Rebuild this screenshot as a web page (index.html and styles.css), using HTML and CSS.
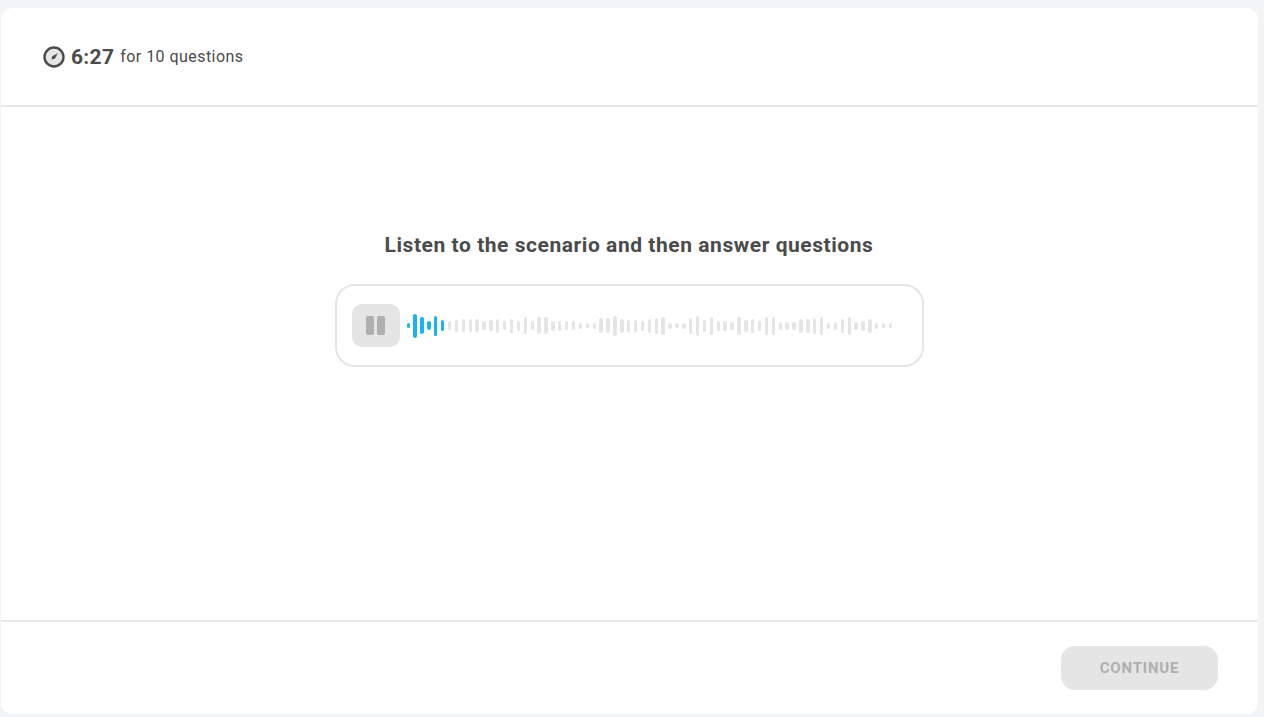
FILE: index.html
```html
<!DOCTYPE html>
<html lang="en">
<head>
    <meta charset="UTF-8">
    <title>Listening scenario</title>
    <link rel="stylesheet" href="styles.css">
</head>
<body>
    <div class="card">
        <!-- Timer -->
        <div class="top-bar">
            <svg class="timer-icon" width="22" height="22" viewBox="0 0 22 22">
                <circle cx="11" cy="11" r="9.5" fill="#e5e5e5" stroke="#4b4b4b" stroke-width="2.4"/>
                <path d="M8.6 13.4 L9.2 10.2 L14.8 7.2 L11.8 12.8 Z" fill="#4b4b4b"/>
            </svg>
            <span class="time">6:27</span>
            <span class="time-label">for 10 questions</span>
        </div>

        <!-- Challenge -->
        <div class="content">
            <h1 class="prompt">Listen to the scenario and then answer questions</h1>
            <div class="player">
                <div class="pause-btn">
                    <span class="pause-bar"></span>
                    <span class="pause-bar"></span>
                </div>
                <div class="wave" id="wave"></div>
            </div>
        </div>

        <!-- Footer -->
        <div class="bottom-bar">
            <button class="continue-btn">CONTINUE</button>
        </div>
    </div>
    <script src="wave.js"></script>
</body>
</html>
```

FILE: styles.css
```css
body {
    margin: 0;
    height: 717px;
    overflow: hidden;
    background-color: #f3f4f6;
    font-family: Roboto, "Liberation Sans", sans-serif;
    color: #4b4b4b;
}

.card {
    display: flex;
    flex-direction: column;
    box-sizing: border-box;
    height: 706px;
    width: 1257px;
    margin: 8px 0 0 1px;
    background-color: #fff;
    border-radius: 12px;
}

.top-bar {
    display: flex;
    align-items: center;
    box-sizing: border-box;
    height: 99px;
    padding: 0 0 0 42px;
    border-bottom: 2px solid #e8e8e8;
}

.timer-icon {
    margin-right: 6px;
}

.time {
    font-size: 21px;
    font-weight: 700;
    letter-spacing: 0.3px;
}

.time-label {
    margin-left: 6px;
    font-size: 16px;
    letter-spacing: 0.45px;
}

.content {
    flex: 1;
    display: flex;
    flex-direction: column;
    align-items: center;
    padding-top: 125px;
    padding-right: 1px;
}

.prompt {
    margin: 0 0 26px;
    font-size: 21px;
    line-height: 26px;
    font-weight: 700;
    letter-spacing: 0.55px;
}

.player {
    display: flex;
    align-items: center;
    box-sizing: border-box;
    width: 589px;
    height: 83px;
    padding: 0 15px;
    border: 2px solid #e5e5e5;
    border-radius: 20px;
}

.pause-btn {
    display: flex;
    align-items: center;
    justify-content: center;
    gap: 3px;
    flex-shrink: 0;
    width: 48px;
    height: 43px;
    margin-right: 7px;
    background-color: #e5e5e5;
    border-radius: 10px;
}

.pause-bar {
    width: 8px;
    height: 19px;
    background-color: #afafaf;
    border-radius: 2px;
}

.wave {
    display: flex;
    align-items: center;
    gap: 3.5px;
}

.wave-bar {
    width: 3.4px;
    background-color: #e5e5e5;
    border-radius: 2px;
}

.wave-bar.played {
    background-color: #1cb0f6;
}

.bottom-bar {
    display: flex;
    justify-content: flex-end;
    align-items: center;
    box-sizing: border-box;
    height: 94px;
    padding: 0 40px 0 0;
    border-top: 2px solid #e8e8e8;
}

.continue-btn {
    width: 157px;
    height: 44px;
    border: none;
    border-radius: 14px;
    background-color: #e5e5e5;
    color: #afafaf;
    font-family: Roboto, "Liberation Sans", sans-serif;
    font-size: 15px;
    font-weight: 700;
    letter-spacing: 0.8px;
}
```

FILE: wave.js
```js
// Heights of the audio bars, the first 6 are already played
const heights = [5, 24, 17, 9, 20, 11, 9, 12, 13, 13, 13, 9, 11, 14, 9, 14, 10, 17, 9, 17, 17, 10, 10, 9, 9, 6, 5, 6, 15, 15, 20, 14, 12, 12, 10, 14, 16, 18, 6, 5, 6, 16, 20, 12, 18, 10, 10, 8, 18, 12, 14, 10, 18, 18, 8, 8, 8, 14, 14, 16, 18, 6, 8, 14, 18, 8, 10, 14, 6, 5, 5];
const wave = document.getElementById('wave');

heights.forEach((h, i) => {
    const bar = document.createElement('span');
    bar.className = i < 6 ? 'wave-bar played' : 'wave-bar';
    bar.style.height = h + 'px';
    wave.appendChild(bar);
});
```
